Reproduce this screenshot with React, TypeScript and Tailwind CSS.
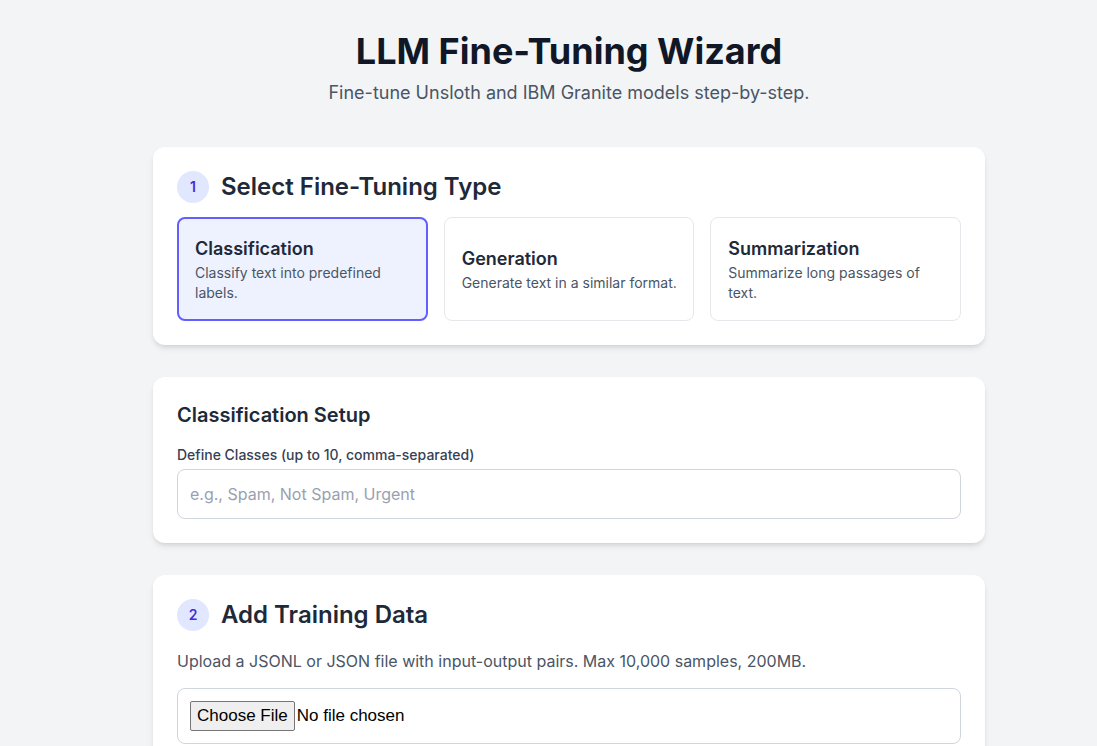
import React from "react";

const options = [
  { title: "Classification", desc: "Classify text into predefined labels.", selected: true },
  { title: "Generation", desc: "Generate text in a similar format.", selected: false },
  { title: "Summarization", desc: "Summarize long passages of text.", selected: false },
];

function Step({ n }: { n: number }) {
  return (
    <div className="w-8 h-8 rounded-full bg-indigo-100 text-indigo-700 text-sm font-semibold flex items-center justify-center shrink-0">
      {n}
    </div>
  );
}

export default function App() {
  return (
    <div
      className="min-h-screen bg-gray-100 pt-[31px] pb-10"
      style={{ fontFamily: "Inter, 'Noto Sans', sans-serif" }}
    >
      <div className="w-[832px] ml-[153px]">
        <div className="text-center mb-10">
          <h1 className="text-4xl font-bold text-gray-900">LLM Fine-Tuning Wizard</h1>
          <p className="mt-2 text-lg text-gray-600">Fine-tune Unsloth and IBM Granite models step-by-step.</p>
        </div>

        <div className="flex flex-col gap-8">
          <section className="bg-white rounded-xl shadow-md p-6">
            <div className="flex items-center gap-3 mb-[14px]">
              <Step n={1} />
              <h2 className="text-2xl font-semibold text-gray-800">Select Fine-Tuning Type</h2>
            </div>
            <div className="grid grid-cols-3 gap-4">
              {options.map((o) => (
                <div
                  key={o.title}
                  className={
                    o.selected
                      ? "border-2 border-indigo-500 bg-indigo-50 rounded-lg pl-4 pr-2 py-4 flex flex-col justify-center"
                      : "border border-gray-200 bg-white rounded-lg pl-[17px] pr-[9px] py-[17px] flex flex-col justify-center"
                  }
                >
                  <h3 className="text-lg font-semibold text-gray-800">{o.title}</h3>
                  <p className="text-sm text-gray-600">{o.desc}</p>
                </div>
              ))}
            </div>
          </section>

          <section className="bg-white rounded-xl shadow-md p-6">
            <h2 className="text-xl font-semibold text-gray-800 mb-4">Classification Setup</h2>
            <label className="block text-sm font-medium text-gray-700 mb-1">
              Define Classes (up to 10, comma-separated)
            </label>
            <input
              type="text"
              placeholder="e.g., Spam, Not Spam, Urgent"
              className="w-full border border-gray-300 rounded-lg px-3 py-3 text-base text-gray-800 placeholder:text-gray-400 outline-none"
            />
          </section>

          <section className="bg-white rounded-xl shadow-md p-6">
            <div className="flex items-center gap-3 mb-[18px]">
              <Step n={2} />
              <h2 className="text-2xl font-semibold text-gray-800">Add Training Data</h2>
            </div>
            <p className="text-base text-gray-600 mb-[15px]">
              Upload a JSONL or JSON file with input-output pairs. Max 10,000 samples, 200MB.
            </p>
            <input
              type="file"
              className="w-full border border-gray-300 rounded-lg p-3 text-[17px] leading-6 text-black file:mr-0.5 file:px-[6px] file:py-[2px] file:leading-6 file:border file:border-solid file:border-[#767676] file:rounded-[2px] file:bg-[#efefef] file:text-black"
              style={{ fontFamily: "'Liberation Sans', Arial, sans-serif" }}
            />
            <div className="h-24" />
          </section>
        </div>
      </div>
    </div>
  );
}
